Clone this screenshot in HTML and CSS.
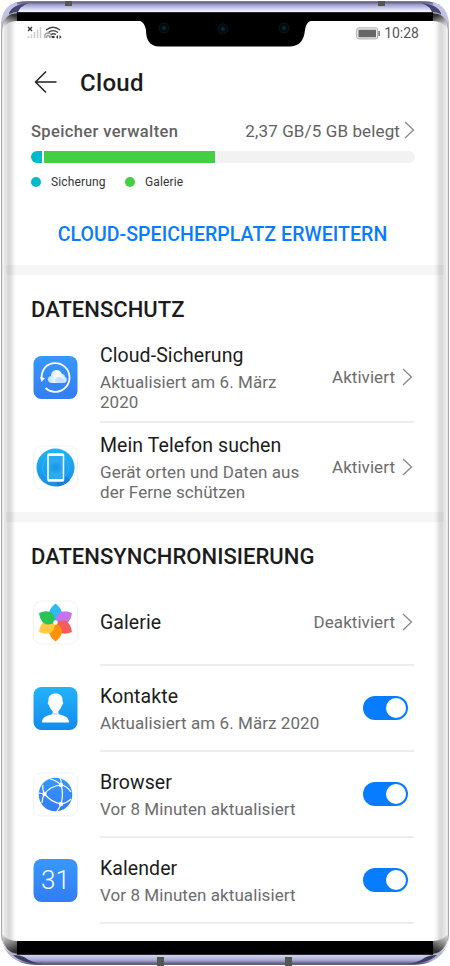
FILE: index.html
```html
<!DOCTYPE html>
<html lang="de">
<head>
<meta charset="utf-8">
<title>Cloud</title>
<link rel="stylesheet" href="styles.css">
</head>
<body>
<div class="phone">
  <svg class="frame" viewBox="0 0 450 966" aria-hidden="true">
    <defs>
      <linearGradient id="rimTop" x1="0" y1="0" x2="0" y2="1"><stop offset="0" stop-color="#9a9ab0"/><stop offset=".2" stop-color="#65658e"/><stop offset=".38" stop-color="#a3a3cc"/><stop offset=".72" stop-color="#d8d8f5"/><stop offset=".88" stop-color="#f7f7ff"/><stop offset="1" stop-color="#777"/></linearGradient>
      <linearGradient id="rimBottom" x1="0" y1="0" x2="0" y2="1"><stop offset="0" stop-color="#777786"/><stop offset=".2" stop-color="#d0d0f0"/><stop offset=".55" stop-color="#aaaad2"/><stop offset=".85" stop-color="#55557c"/><stop offset="1" stop-color="#8f8fa9"/></linearGradient>
      <linearGradient id="edge" x1="0" y1="0" x2="1" y2="0"><stop offset="0" stop-color="#bdbdbd"/><stop offset=".09" stop-color="#dedede"/><stop offset=".12" stop-color="#fff"/><stop offset=".19" stop-color="#e9e9e9"/><stop offset=".38" stop-color="#e1e1e1"/><stop offset=".48" stop-color="#d8d8d8"/><stop offset=".65" stop-color="#dedede"/><stop offset=".85" stop-color="#f5f5f5"/><stop offset="1" stop-color="#fff"/></linearGradient>
      <linearGradient id="cornerTop" x1="0" y1="1" x2=".35" y2="0"><stop offset="0" stop-color="#f2f2f2"/><stop offset=".4" stop-color="#b5b5b5"/><stop offset="1" stop-color="#333"/></linearGradient>
      <linearGradient id="cornerBottom" x1="0" y1="0" x2=".35" y2="1"><stop offset="0" stop-color="#e6e6e6"/><stop offset=".45" stop-color="#999"/><stop offset="1" stop-color="#333"/></linearGradient>
      <clipPath id="body"><path d="M1 24Q2 1 28 1H422Q448 1 449 24V935C449 950 436 965 414 965H36C14 965 1 950 1 935Z"/></clipPath>
    </defs>
    <g clip-path="url(#body)">
      <path fill="#fff" d="M0 0h450v966H0z"/>
      <path fill="url(#rimTop)" d="M0 0h450v13H0z"/>
      <path fill="url(#rimBottom)" d="M0 953h450v13H0z"/>
      <path d="M17 13h416v8H17zM17 941h416v13H17z"/>
      <path fill="#292929" d="M17 12h416v1H17zM17 954h416v1H17z"/>
      <g id="leftEdge">
        <path fill="url(#edge)" d="M1 21h15v920H1z"/>
        <path fill="#c2c2e4" d="M0 0H17V13Q5 14 3 27H0Z"/>
        <path fill="#464674" d="M9 13Q13 4 29 3Q20 6 18 12Q13 12 9 15Z"/>
        <path fill="#b4b4d8" d="M0 936Q3 953 17 954V966H0Z"/>
        <path fill="#3b3b66" d="M13 955Q20 955 24 957Q32 963 44 964Q22 964 13 955Z"/>
        <path fill="url(#cornerTop)" d="M3 28Q4 13 17 13V21Q8 21 4 28Z"/>
        <path fill="url(#cornerBottom)" d="M2 934Q8 941 17 941V954Q4 953 2 934Z"/>
      </g>
      <use href="#leftEdge" transform="matrix(-1 0 0 1 450 0)"/>
    </g>
    <path fill="none" stroke="#aaa" d="M1.500 935V30Q3 13 17 12.500M448.500 935V30Q447 13 433 12.500M1.500 935Q4 953 17 954.500M448.500 935Q446 953 433 954.500"/>
    <path fill="#555" d="M65 1h7v5h-7zM378 1h7v5h-7zM157 957h7v9h-7zM285 957h7v9h-7z"/>
    <path d="M138 20.500C143 21 145 25 146 30C146 39 149 46.500 160 46.500H289C300 46.500 304 40 305 30C306 24 308 21 313 20.500Z"/>
    <g fill="#030b0e" stroke="#0b1416" stroke-width="1"><circle cx="164" cy="28" r="5"/><circle cx="223" cy="29" r="5"/><circle cx="284" cy="28" r="5"/></g>
    <g fill="#092a31"><circle cx="164" cy="28" r="2"/><circle cx="223" cy="29" r="2"/><circle cx="284" cy="28" r="2"/></g>
  </svg>

  <main class="screen">
    <div class="status">
      <svg width="36" height="16" viewBox="0 0 36 16">
        <path stroke="#333" stroke-width="1.300" d="M1 2l4 4M5 2l-4 4"/>
        <path stroke="#ccc" stroke-width="1.500" d="M1.500 11v2M4.500 9.500V13M7.500 7v6M10.500 4.500V13M13.500 2v11"/>
        <g fill="none" stroke="#444" stroke-width="1.300"><path d="M19 5Q26-.5 33 5M21.500 7.500Q26 3.800 31 7.500M24 9.500Q26.500 8 29 9.500"/><path stroke="#999" d="M18 13Q17 8 21 8T24 13M20 13Q19 10.500 21 10.500T22.500 13"/></g>
        <path fill="#333" d="M25 11h2.500v2H25zM29 12l2-2v4zM34.500 12l-2-2v4z"/>
      </svg>
      <div class="clock">
        <svg width="25" height="13" viewBox="0 0 25 13"><rect x=".7" y=".9" width="21" height="11" rx="2" fill="#eee" stroke="#aaa"/><path fill="#666" d="M2.500 2.700h17.500v7.500H2.500zM22.500 4h1.300v5h-1.300z"/></svg>
        <span>10:28</span>
      </div>
    </div>

    <header class="title">
      <svg width="24" height="24" viewBox="0 0 24 24" fill="none" stroke="#222" stroke-width="1.500"><path d="M22.500 11H1.500M12 .5L1.500 11L12 21.500"/></svg>
      <h1>Cloud</h1>
    </header>

    <section class="storage">
      <div class="usage"><span class="manage">Speicher verwalten</span><span class="used">2,37 GB/5 GB belegt</span><svg class="chev" viewBox="0 0 11 18"><path d="M1 1l8.500 8L1 17"/></svg></div>
      <div class="meter"><i class="backup"></i><i class="gallery"></i><i class="free"></i></div>
      <div class="legend"><i class="dot backup"></i><span class="first">Sicherung</span><i class="dot gallery"></i><span>Galerie</span></div>
      <div class="expand"><span>CLOUD-SPEICHERPLATZ ERWEITERN</span></div>
    </section>
    <div class="band"></div>

    <section>
      <h2>DATENSCHUTZ</h2>
      <div class="row tall">
        <svg class="icon" viewBox="0 0 45 45">
          <defs><linearGradient id="blue" x1="0" y1="0" x2="0" y2="1"><stop stop-color="#3798fb"/><stop offset="1" stop-color="#337cf5"/></linearGradient><linearGradient id="cld"><stop stop-color="#b9ddff"/><stop offset=".5" stop-color="#fff"/><stop offset="1" stop-color="#c7e3ff"/></linearGradient></defs>
          <rect x=".5" y="1" width="44" height="43" rx="8" fill="url(#blue)"/>
          <path fill="none" stroke="#fff" stroke-width="1.800" d="M12.500 33A14.300 14.300 0 1 0 12 12.500Q8.500 17 8.500 23"/>
          <path fill="#fff" d="M7 22l5 1-3.500 4z"/>
          <path fill="url(#cld)" d="M19 28c-5 0-6-6-1-7c0-7 9-8 11-2c3 0 3 3 3 3c3 1 2 6-1 6z"/>
          <path fill="#a9d1fb" opacity=".6" d="M23 28c-3-5 3-9 6-4c3 0 3 4 1 4z"/>
        </svg>
        <div class="text"><h3>Cloud-Sicherung</h3><p>Aktualisiert am 6. März<br>2020</p></div>
        <span class="state">Aktiviert</span><svg class="chev" viewBox="0 0 11 18"><path d="M1 1l8.500 8L1 17"/></svg>
      </div>
      <div class="row tall find">
        <svg class="icon" viewBox="0 0 45 45">
          <defs><linearGradient id="find" x1="0" y1="0" x2="0" y2="1"><stop stop-color="#20b5f5"/><stop offset="1" stop-color="#168dea"/></linearGradient></defs>
          <rect x=".5" y="1" width="44" height="43" rx="8" fill="#fff" stroke="#f3f3f3"/>
          <circle cx="22.500" cy="22.500" r="19" fill="url(#find)"/>
          <path fill="#1680d9" d="M23 23L37 35A19 19 0 0 1 24 41.500Z"/>
          <circle cx="22.500" cy="22.500" r="13" fill="none" stroke="#62c4f6" opacity=".4"/>
          <rect x="15" y="9" width="15.500" height="27" rx="1" fill="#2fa8f0" stroke="#fff" stroke-width="1.500"/>
          <path stroke="#fff" stroke-width="2" d="M15 10h15.500M15 35h15.500"/><circle cx="22.500" cy="22.500" r="5.500" fill="#22a0ec"/><circle cx="22.500" cy="22.500" r="2.500" fill="#1997e8"/>
        </svg>
        <div class="text"><h3>Mein Telefon suchen</h3><p>Gerät orten und Daten aus<br>der Ferne schützen</p></div>
        <span class="state">Aktiviert</span><svg class="chev" viewBox="0 0 11 18"><path d="M1 1l8.500 8L1 17"/></svg>
      </div>
    </section>
    <div class="band"></div>

    <section>
      <h2>DATENSYNCHRONISIERUNG</h2>
      <div class="row">
        <svg class="icon" viewBox="0 0 45 45">
          <defs><path id="petal" d="M22.500 22C17 19 14.500 14 17 10Q18 7 22.500 3.500Q27 7 28 10C30.500 14 28 19 22.500 22Z"/></defs>
          <rect x=".5" y="1" width="44" height="43" rx="8" fill="#fff" stroke="#f3f3f3"/>
          <use href="#petal" fill="#2fbaf4"/><use href="#petal" fill="#c574ed" transform="rotate(60 22.500 22.500)"/><use href="#petal" fill="#f55c5a" transform="rotate(120 22.500 22.500)"/><use href="#petal" fill="#ff910b" transform="rotate(180 22.500 22.500)"/><use href="#petal" fill="#ffc943" transform="rotate(240 22.500 22.500)"/><use href="#petal" fill="#29c358" transform="rotate(300 22.500 22.500)"/>
          <circle cx="22.500" cy="22.500" r="2.300" fill="#fff"/>
        </svg>
        <div class="text"><h3>Galerie</h3></div>
        <span class="state">Deaktiviert</span><svg class="chev" viewBox="0 0 11 18"><path d="M1 1l8.500 8L1 17"/></svg>
      </div>
      <div class="row">
        <svg class="icon" viewBox="0 0 45 45">
          <defs><linearGradient id="sky" x1="0" y1="0" x2="0" y2="1"><stop stop-color="#24b3fb"/><stop offset="1" stop-color="#118bed"/></linearGradient></defs>
          <rect x=".5" y="1" width="44" height="43" rx="8" fill="url(#sky)"/>
          <path fill="#fff" d="M9 36.500c0-6 5-6.500 10.500-8.500c.5-1 .5-2 0-3c-2-2-3-4-3.500-6c-2-1-1-3-.5-4C15 10 18 7.500 22.500 7.500S30 10 29.500 15c.5 1 1.500 3-.5 4c-.5 2-1.500 4-3.500 6c-.5 1-.5 2 0 3C31 30 36 30.500 36 36.500Z"/>
          <path fill="#d6d8fb" d="M19.500 26Q22.500 28 25.500 26V28Q22.500 30 19.500 28Z"/>
        </svg>
        <div class="text"><h3>Kontakte</h3><p>Aktualisiert am 6. März 2020</p></div><i class="toggle"></i>
      </div>
      <div class="row">
        <svg class="icon" viewBox="0 0 45 45">
          <rect x=".5" y="1" width="44" height="43" rx="8" fill="#fff" stroke="#f3f3f3"/>
          <circle cx="22.500" cy="22.500" r="16.800" fill="url(#blue)"/>
          <g fill="none" stroke="#fff" stroke-width="1.200"><path d="M6 21L11.500 22Q17 14 28 13Q31 22 28 32Q18 30 11.500 22Q9 26 9 31M11.500 22Q9 17 10 13M17 7Q23 8 28 13Q34 14 38 20M28 13Q29 9 27 6M28 32Q34 31 38 27M28 32Q27 35 24 39"/></g>
          <g fill="#fff"><circle cx="11.500" cy="22" r="2.200"/><circle cx="28" cy="13" r="2.200"/><circle cx="28" cy="32" r="2.200"/></g>
        </svg>
        <div class="text"><h3>Browser</h3><p>Vor 8 Minuten aktualisiert</p></div><i class="toggle"></i>
      </div>
      <div class="row">
        <svg class="icon" viewBox="0 0 45 45"><rect x=".5" y="1" width="44" height="43" rx="8" fill="url(#blue)"/><text class="day" x="22.500" y="31.300" text-anchor="middle">31</text></svg>
        <div class="text"><h3>Kalender</h3><p>Vor 8 Minuten aktualisiert</p></div><i class="toggle"></i>
      </div>
    </section>
  </main>
</div>
</body>
</html>
```
FILE: styles.css
```css
* { box-sizing: border-box; }
body { margin: 0; background: #fff; font-family: Roboto, sans-serif; color: #1c1c1c; }
h1, h2, h3, p { margin: 0; }
svg { display: block; flex: none; }
.phone { position: relative; width: 450px; height: 966px; overflow: hidden; }
.frame { position: absolute; inset: 0; width: 450px; height: 966px; }
.screen { position: relative; padding-top: 21px; white-space: nowrap; }
.status { height: 24px; padding: 0 31px 0 27px; display: flex; justify-content: space-between; align-items: center; }
.clock { display: flex; align-items: center; gap: 3px; font-size: 14px; line-height: 24px; color: #555; }
.title { height: 76px; padding: 0 34px; display: flex; align-items: center; gap: 22px; }
.title h1 { font-size: 24px; font-weight: 500; line-height: 28px; letter-spacing: .3px; }
.storage { height: 144px; padding: 0 35px 0 31px; }
.usage { height: 20px; display: flex; align-items: center; font-size: 16px; color: #626262; }
.manage { flex: 1; font-weight: 500; font-size: 16.5px; letter-spacing: .37px; }
.used { margin-right: 4px; font-size: 17px; letter-spacing: .12px; }
.chev { width: 11px; height: 18px; fill: none; stroke: #888; stroke-width: 1.3; }
.usage .chev { transform: translateY(-1px); }
.meter { height: 12px; margin-top: 10px; display: flex; gap: 2px; border-radius: 6px; overflow: hidden; }
.backup { width: 11px; background: #00b9cb; }
.gallery { width: 171px; background: #43ce43; }
.free { flex: 1; background: #f2f2f2; }
.legend { height: 20px; margin-top: 9px; display: flex; align-items: center; font-size: 12px; letter-spacing: .13px; color: #333; }
.dot { width: 10px; height: 10px; border-radius: 50%; margin-right: 10px; }
.legend .first { width: 74px; }
.expand { height: 30px; margin-top: 28px; text-align: center; font-size: 19.5px; line-height: 30px; font-weight: 500; letter-spacing: .06px; color: #087cff; }
.expand span { margin-left: -1px; }
.band { height: 10px; margin: 0 6px; background: rgba(0, 0, 0, .035); }
h2 { height: 57px; padding: 21px 31px 0; font-size: 22px; line-height: 28px; font-weight: 500; letter-spacing: .03px; }
.row { height: 86px; margin-left: 33px; padding-right: 37px; display: flex; align-items: center; position: relative; }
.row:not(.find)::after { content: ""; position: absolute; left: 67px; right: 36px; bottom: -1px; height: 2px; background: #ededed; }
.tall { height: 90px; }
.icon { width: 45px; height: 45px; margin-right: 22px; }
.text { flex: 1; padding-top: 1px; }
.tall .text { padding-top: 2px; }
h3 { font-size: 19.5px; line-height: 24px; font-weight: 400; letter-spacing: .08px; }
.text p { margin-top: 4px; font-size: 17px; line-height: 20px; letter-spacing: .07px; color: #6c6c6c; }
.state { margin-right: 7px; padding-bottom: 1px; font-size: 17px; line-height: 20px; letter-spacing: .05px; color: #6c6c6c; }
.toggle { width: 45.5px; height: 24px; margin-right: 5px; border-radius: 12px; background: #087cff; display: flex; justify-content: flex-end; align-items: center; padding-right: 2px; }
.toggle::after { content: ""; width: 20.5px; height: 20.5px; border-radius: 50%; background: #fff; }
.day { font-size: 26px; font-weight: 300; fill: #fff; }
```
